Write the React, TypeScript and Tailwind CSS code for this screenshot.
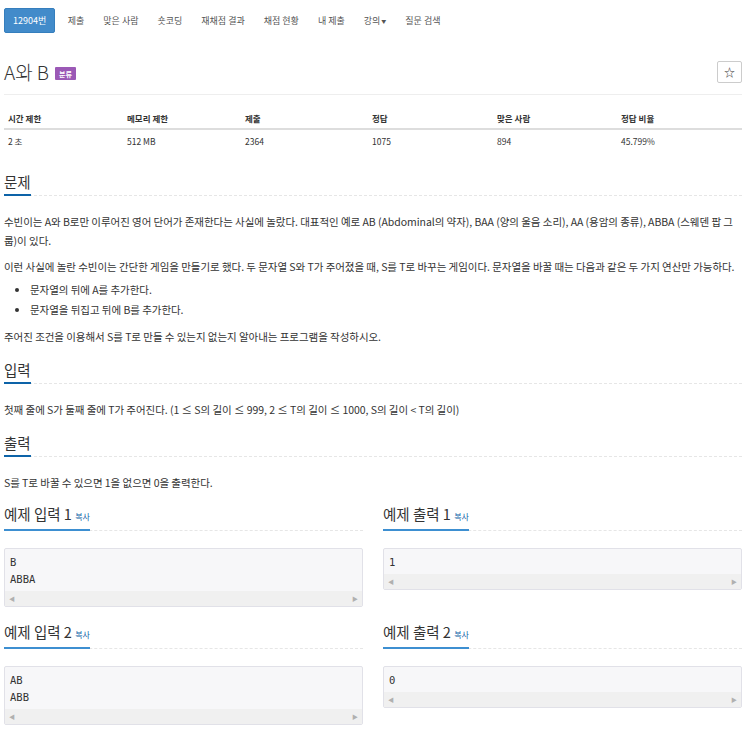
import { ReactNode } from "react"

const navItems = ["제출", "맞은 사람", "숏코딩", "재채점 결과", "채점 현황", "내 제출", "강의", "질문 검색"]

const stats = [
  { label: "시간 제한", value: "2 초", w: "w-[119px]" },
  { label: "메모리 제한", value: "512 MB", w: "w-[118px]" },
  { label: "제출", value: "2364", w: "w-[127px]" },
  { label: "정답", value: "1075", w: "w-[125px]" },
  { label: "맞은 사람", value: "894", w: "w-[124px]" },
  { label: "정답 비율", value: "45.799%", w: "w-[125px]" },
]

const samples = [
  { n: 1, input: "B\nABBA", output: "1", mt: "mt-[12px]" },
  { n: 2, input: "AB\nABB", output: "0", mt: "mt-[15px]" },
]

function Heading({ children, light }: { children: ReactNode; light?: boolean }) {
  return (
    <div className="flex border-b border-dashed border-[#e6e6e6]">
      <h3
        className={`border-b-2 -mb-px pb-[2px] text-[14.5px] leading-[20px] text-[#333] ${
          light ? "border-[#3d8fd1]" : "border-[#0d63a8]"
        }`}
      >
        {children}
      </h3>
    </div>
  )
}

function SampleBox({ text }: { text: string }) {
  return (
    <div className="border border-[#e1e1e8] bg-[#f7f7f9] rounded-[2px]">
      <pre className="px-[5px] pt-[5px] pb-[3px] text-[10.5px] leading-[17px] text-[#333] font-['DejaVu_Sans_Mono',monospace] whitespace-pre">
        {text}
      </pre>
      <div className="h-[15px] bg-[#f0f0f0] flex items-center justify-between px-[4px] text-[6px] text-[#b0b0b0]">
        <span>◀</span>
        <span>▶</span>
      </div>
    </div>
  )
}

function Sample({ title, n, text }: { title: string; n: number; text: string }) {
  return (
    <div>
      <Heading light>
        {title} {n} <span className="text-[8px] text-[#0d63a8]">복사</span>
      </Heading>
      <div className="mt-[17px]">
        <SampleBox text={text} />
      </div>
    </div>
  )
}

export default function App() {
  return (
    <div className="w-[750px] min-h-[730px] bg-white px-[4px] pt-[8px] text-[#333] font-['Noto_Sans_CJK_KR','Noto_Sans',sans-serif]">
      <nav className="flex items-center h-[25px] text-[9px]">
        <span className="h-full px-[8px] flex items-center bg-[#428bca] text-white rounded-[2px] border border-[#357ebd] mr-[3px]">
          12904번
        </span>
        {navItems.map((item) => (
          <span key={item} className="px-[9.5px] text-[#555] flex items-center">
            {item}
            {item === "강의" && <span className="ml-[1px] text-[5px]">▼</span>}
          </span>
        ))}
      </nav>

      <div className="flex items-center justify-between mt-[26px] pb-[9px] border-b border-[#eee] mr-[4px]">
        <div className="flex items-center">
          <h1 className="text-[19px] leading-[26px] font-light text-[#333]">A와 B</h1>
          <span className="ml-[6px] mt-[3px] bg-[#9b59b6] text-white text-[7px] font-bold px-[4px] py-[1.5px] leading-[10px] rounded-[1px]">
            분류
          </span>
        </div>
        <button className="w-[25px] h-[22px] border border-[#ccc] rounded-[2px] text-[11px] flex items-center justify-center text-[#333]">
          ☆
        </button>
      </div>

      <table className="w-[738px] mt-[13px] text-[8.5px] table-fixed border-collapse">
        <thead>
          <tr className="border-b-2 border-[#ddd]">
            {stats.map((s) => (
              <th key={s.label} className={`${s.w} text-left font-bold py-[4px] px-[4px] leading-[12px]`}>
                {s.label}
              </th>
            ))}
          </tr>
        </thead>
        <tbody>
          <tr>
            {stats.map((s) => (
              <td key={s.label} className="py-[5px] px-[4px] leading-[12px]">
                {s.value}
              </td>
            ))}
          </tr>
        </tbody>
      </table>

      <div className="mr-[4px]">
        <section className="mt-[20px]">
          <Heading>문제</Heading>
          <div className="mt-[16px] text-[10.5px] leading-[19px] tracking-[-0.05px]">
            <p>
              수빈이는 A와 B로만 이루어진 영어 단어가 존재한다는 사실에 놀랐다. 대표적인 예로 AB (Abdominal의 약자), BAA (양의 울음 소리), AA (용암의 종류), ABBA (스웨덴 팝 그룹)이 있다.
            </p>
            <p className="mt-[7px]">
              이런 사실에 놀란 수빈이는 간단한 게임을 만들기로 했다. 두 문자열 S와 T가 주어졌을 때, S를 T로 바꾸는 게임이다. 문자열을 바꿀 때는 다음과 같은 두 가지 연산만 가능하다.
            </p>
            <ul className="list-disc pl-[26px] mt-[4px]">
              <li className="leading-[20px]">문자열의 뒤에 A를 추가한다.</li>
              <li className="leading-[20px]">문자열을 뒤집고 뒤에 B를 추가한다.</li>
            </ul>
            <p className="mt-[7px]">주어진 조건을 이용해서 S를 T로 만들 수 있는지 없는지 알아내는 프로그램을 작성하시오.</p>
          </div>
        </section>

        <section className="mt-[14px]">
          <Heading>입력</Heading>
          <p className="mt-[16px] text-[10.5px] leading-[19px] tracking-[-0.05px]">
            첫째 줄에 S가 둘째 줄에 T가 주어진다. (1 ≤ S의 길이 ≤ 999, 2 ≤ T의 길이 ≤ 1000, S의 길이 &lt; T의 길이)
          </p>
        </section>

        <section className="mt-[14px]">
          <Heading>출력</Heading>
          <p className="mt-[16px] text-[10.5px] leading-[19px] tracking-[-0.05px]">
            S를 T로 바꿀 수 있으면 1을 없으면 0을 출력한다.
          </p>
        </section>

        {samples.map((s) => (
          <div key={s.n} className={`grid grid-cols-2 gap-x-[20px] ${s.mt}`}>
            <Sample title="예제 입력" n={s.n} text={s.input} />
            <Sample title="예제 출력" n={s.n} text={s.output} />
          </div>
        ))}
      </div>
    </div>
  )
}
